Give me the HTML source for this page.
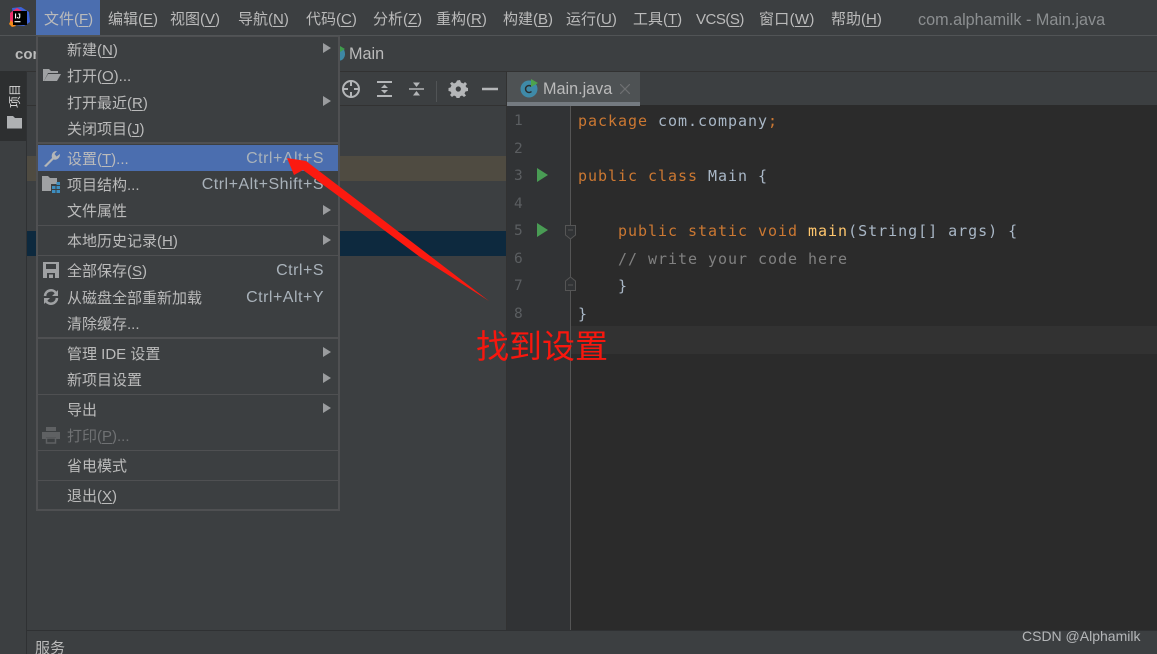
<!DOCTYPE html>
<html><head><meta charset="utf-8"><style>
*{box-sizing:border-box}
html,body{margin:0;padding:0;background:#3c3f41}
#r{position:relative;width:1157px;height:654px;overflow:hidden;background:#3c3f41;font-family:"Liberation Sans","Noto Sans CJK SC",sans-serif;font-size:15px;color:#bbb}
.a{position:absolute}
.t{position:absolute;white-space:nowrap;line-height:20px}
.m{position:absolute;top:10px;white-space:nowrap;line-height:20px;font-size:15px;color:#bbb}
.i{position:absolute;left:67px;white-space:nowrap;line-height:20px;color:#bbb}
.s{position:absolute;white-space:nowrap;line-height:20px;color:#a9b2ba;right:833px;font-size:16px;letter-spacing:.5px}
.v{position:absolute;left:38px;width:300px;height:1px;background:#4f5052}
.ar{position:absolute;left:323px;width:0;height:0;border-left:8px solid #9a9c9e;border-top:5px solid transparent;border-bottom:5px solid transparent}
u{text-underline-offset:2px}
.c{position:absolute;font-family:"DejaVu Sans Mono","Liberation Mono",monospace;font-size:15px;letter-spacing:.97px;line-height:20px;white-space:pre;color:#a9b7c6;left:578px}
.k{color:#cc7832}
.n{position:absolute;left:514px;font-family:"DejaVu Sans Mono","Liberation Mono",monospace;font-size:14.5px;line-height:20px;color:#5b5e61}
</style></head><body><div id="r">
<!-- title bar -->
<div class="a" style="left:0;top:35px;width:1157px;height:1px;background:#515456"></div>
<div class="a" style="left:36px;top:0;width:64px;height:35px;background:#4b6eaf"></div>
<svg class="a" style="left:9px;top:7px" width="21" height="21" viewBox="0 0 21 21"><path d="M3 1L12 0 20 5 21 15 15 19 6 18z" fill="#3d62d8"/><path d="M1 6L8 1 13 4 5 19 1 15z" fill="#ee2f6c"/><path d="M2 13L7 19 3 20 0 17z" fill="#f28a1b"/><rect x="4" y="4" width="14" height="14" fill="#000"/><text x="5.5" y="11.5" font-family="Liberation Sans" font-weight="700" font-size="7.5" fill="#fff">IJ</text><rect x="5.5" y="14" width="6" height="1.3" fill="#ddd"/></svg>
<span class="m" style="left:44px"><span>文件(<u>F</u>)</span></span>
<span class="m" style="left:108px">编辑(<u>E</u>)</span>
<span class="m" style="left:170px">视图(<u>V</u>)</span>
<span class="m" style="left:238px">导航(<u>N</u>)</span>
<span class="m" style="left:306px">代码(<u>C</u>)</span>
<span class="m" style="left:373px">分析(<u>Z</u>)</span>
<span class="m" style="left:436px">重构(<u>R</u>)</span>
<span class="m" style="left:503px">构建(<u>B</u>)</span>
<span class="m" style="left:566px">运行(<u>U</u>)</span>
<span class="m" style="left:633px">工具(<u>T</u>)</span>
<span class="m" style="left:696px;letter-spacing:-.5px">VCS(<u>S</u>)</span>
<span class="m" style="left:759px;letter-spacing:.3px">窗口(<u>W</u>)</span>
<span class="m" style="left:831px">帮助(<u>H</u>)</span>
<span class="m" style="left:918px;color:#8c8f91;font-size:16.2px">com.alphamilk - Main.java</span>
<!-- nav bar -->
<div class="a" style="left:0;top:71px;width:1157px;height:1px;background:#323232"></div>
<span class="t" style="left:15px;top:45px;font-weight:700;font-size:15px">com</span>
<svg class="a" style="left:339px;top:46px" width="8" height="16"><path d="M0 0A8 8 0 0 1 3 14L0 15z" fill="#3d87a5"/><path d="M1 0L6 3 1 6z" fill="#3f9c4b"/></svg>
<span class="t" style="left:349px;top:44px;font-size:16.2px">Main</span>
<!-- left strip -->
<div class="a" style="left:0;top:72px;width:27px;height:558px;background:#3c3f41"></div>
<div class="a" style="left:26px;top:72px;width:1px;height:582px;background:#2f3133"></div>
<div class="a" style="left:0;top:71px;width:26px;height:70px;background:#2d2f30"></div>
<span class="a" style="left:9px;top:84px;font-size:12px;line-height:13px;color:#d5d5d5;writing-mode:vertical-rl;text-orientation:sideways;transform:rotate(180deg)">项目</span>
<svg class="a" style="left:7px;top:116px" width="15" height="13"><path d="M0 0H6L8 2H15V12.500H0z" fill="#afb1b3"/></svg>
<!-- project panel -->
<div class="a" style="left:27px;top:105px;width:480px;height:1px;background:#323232"></div>
<div class="a" style="left:27px;top:156px;width:479px;height:25px;background:#4f4b41"></div>
<div class="a" style="left:27px;top:231px;width:479px;height:25px;background:#0d293e"></div>
<svg class="a" style="left:340px;top:78px" width="160" height="24" fill="none" stroke="#b4b6b8"><circle cx="11" cy="11" r="8" stroke-width="2"/><path d="M11 3V8M11 14V19M3 11H8M14 11H19" stroke-width="2"/><path d="M37 4H52M37 18H52" stroke-width="2"/><path d="M44.500 6.500L48 10H41zM44.500 15.500L48 12H41z" fill="#b4b6b8" stroke="none"/><path d="M69 11H84" stroke-width="1.500"/><path d="M76.500 9L73 4.500H80zM76.500 13L73 17.500H80z" fill="#b4b6b8" stroke="none"/><path d="M96.500 3V24" stroke="#515456"/><g transform="translate(-1,0)"><path d="M118 4.500L121 4 122 6.500 124.500 7.500 126 6 128 8 126.500 10 127.500 11.500 129 12 129 15 126.500 15.500 125.500 17.500 127 19.500 125 21 123 19.500 121 20.500 120.500 22H117.500L117 20.500 115 19.500 113 21 111 19 112.500 17 111.500 15.500 109.500 15V12L111.500 11.500 112.500 9.500 111 7.500 113 6 115 7.500 117 6.500z" transform="translate(0,-2)" fill="#b4b6b8" stroke="none"/><circle cx="119.300" cy="11" r="2.600" fill="#3c3f41" stroke="none"/></g><path d="M142 11H158" stroke-width="2.500"/></svg>
<!-- editor -->
<div class="a" style="left:506px;top:72px;width:1px;height:558px;background:#323232"></div>
<div class="a" style="left:507px;top:105px;width:650px;height:525px;background:#2b2b2b"></div>
<div class="a" style="left:507px;top:106px;width:64px;height:524px;background:#313335"></div>
<div class="a" style="left:507px;top:326px;width:650px;height:28px;background:#323232"></div>
<div class="a" style="left:507px;top:326px;width:64px;height:28px;background:#313335"></div>
<div class="a" style="left:570px;top:106px;width:1px;height:524px;background:#555"></div>
<div class="a" style="left:507px;top:72px;width:133px;height:34px;background:#4e5254"></div>
<div class="a" style="left:507px;top:102px;width:133px;height:4px;background:#747a80"></div>
<svg class="a" style="left:518px;top:78px" width="22" height="20"><circle cx="11" cy="11" r="8.500" fill="#3f8aa8"/><path d="M13.500 8.500A3.500 3.500 0 1 0 13.500 13.500" fill="none" stroke="#2b2d2e" stroke-width="1.500"/><path d="M13 1L20 5 13 9z" fill="#4da34d"/></svg>
<span class="t" style="left:543px;top:79px;color:#bbb;font-size:16.2px">Main.java</span>
<svg class="a" style="left:620px;top:84px" width="10" height="10"><path d="M0 0L10 10M10 0L0 10" stroke="#6e7072" stroke-width="1.200"/></svg>
<span class="n" style="top:111px">1</span><span class="n" style="top:139px">2</span><span class="n" style="top:166px">3</span><span class="n" style="top:194px">4</span><span class="n" style="top:221px">5</span><span class="n" style="top:249px">6</span><span class="n" style="top:276px">7</span><span class="n" style="top:304px">8</span><span class="n" style="top:332px">9</span>
<svg class="a" style="left:537px;top:168px" width="12" height="14"><path d="M0 0L11 7 0 14z" fill="#499c54"/></svg>
<svg class="a" style="left:537px;top:223px" width="12" height="14"><path d="M0 0L11 7 0 14z" fill="#499c54"/></svg>
<svg class="a" style="left:564px;top:224px" width="14" height="68" fill="#313335" stroke="#555"><path d="M1.500 1.500H11.500V11L6.500 15 1.500 11z"/><path d="M4 6H9"/><path d="M1.500 66.500H11.500V57L6.500 53 1.500 57z"/><path d="M4 61H9"/></svg>
<div class="c" style="top:111px"><span class="k">package</span> com.company<span class="k">;</span></div>
<div class="c" style="top:166px"><span class="k">public class</span> Main {</div>
<div class="c" style="top:221px">    <span class="k">public static void</span> <span style="color:#ffc66d">main</span>(String[] args) {</div>
<div class="c" style="top:249px;color:#808080">    // write your code here</div>
<div class="c" style="top:276px">    }</div>
<div class="c" style="top:304px">}</div>
<!-- bottom -->
<div class="a" style="left:27px;top:630px;width:1130px;height:1px;background:#2f3133"></div>
<span class="t" style="left:35px;top:639px">服务</span>
<span class="t" style="left:1022px;top:626px;font-size:14px;color:#b5b7b9">CSDN @Alphamilk</span>
<!-- menu -->
<div class="a" style="left:36px;top:36px;width:304px;height:475px;background:#3c3f41;border:solid #4f5052;border-width:1px 2px 2px 2px"></div>
<div class="a" style="left:38px;top:145px;width:300px;height:26px;background:#4b6eaf"></div>
<div class="v" style="top:142px;height:2px"></div><div class="v" style="top:225px"></div><div class="v" style="top:255px"></div><div class="v" style="top:337px;height:2px"></div><div class="v" style="top:394px"></div><div class="v" style="top:450px"></div><div class="v" style="top:480px"></div>
<span class="i" style="top:41px">新建(<u>N</u>)</span>
<span class="i" style="top:67px">打开(<u>O</u>)...</span>
<span class="i" style="top:94px">打开最近(<u>R</u>)</span>
<span class="i" style="top:120px">关闭项目(<u>J</u>)</span>
<span class="i" style="top:150px">设置(<u>T</u>)...</span>
<span class="i" style="top:176px">项目结构...</span>
<span class="i" style="top:202px">文件属性</span>
<span class="i" style="top:232px">本地历史记录(<u>H</u>)</span>
<span class="i" style="top:262px">全部保存(<u>S</u>)</span>
<span class="i" style="top:289px">从磁盘全部重新加载</span>
<span class="i" style="top:315px">清除缓存...</span>
<span class="i" style="top:345px">管理 IDE 设置</span>
<span class="i" style="top:371px">新项目设置</span>
<span class="i" style="top:401px">导出</span>
<span class="i" style="top:427px;color:#6f7173">打印(<u>P</u>)...</span>
<span class="i" style="top:457px">省电模式</span>
<span class="i" style="top:487px">退出(<u>X</u>)</span>
<span class="s" style="top:149px">Ctrl+Alt+S</span>
<span class="s" style="top:175px">Ctrl+Alt+Shift+S</span>
<span class="s" style="top:261px">Ctrl+S</span>
<span class="s" style="top:288px">Ctrl+Alt+Y</span>
<div class="ar" style="top:43px"></div><div class="ar" style="top:96px"></div><div class="ar" style="top:205px"></div><div class="ar" style="top:235px"></div><div class="ar" style="top:347px"></div><div class="ar" style="top:373px"></div><div class="ar" style="top:403px"></div>
<!-- menu icons -->
<svg class="a" style="left:43px;top:68px" width="18" height="14"><path d="M0 1H6L8 3H15V5H5L1 13H0z" fill="#9fa1a3"/><path d="M5 6H18L14 13H1z" fill="#9fa1a3"/></svg>
<svg class="a" style="left:43px;top:150px" width="18" height="18"><path d="M1 16L9 8C8 4 10 1 14 1L11.500 4 13.500 6.500 17 4C17 8 14 10.500 10.500 9.500L3 17z" fill="#b4b6b8"/></svg>
<svg class="a" style="left:42px;top:176px" width="19" height="17"><path d="M0 0H6L8 2H15V8H9V15H0z" fill="#9fa1a3"/><path d="M10 10H13.500V13H10zM14.500 10H18V13H14.500zM10 14H13.500V17H10zM14.500 14H18V17H14.500zM14.500 6H18V9H14.500z" fill="#3d8ec0"/></svg>
<svg class="a" style="left:43px;top:262px" width="16" height="16"><path d="M0 0H16V16H0z" fill="#9fa1a3"/><path d="M3 2H13V7H3zM4 11H12V16H4z" fill="#3c3f41"/><path d="M6 12.500H10V16H6z" fill="#9fa1a3"/></svg>
<svg class="a" style="left:43px;top:289px" width="16" height="16" fill="none" stroke="#9fa1a3" stroke-width="2.600"><path d="M2 7A6 6 0 0 1 13 4"/><path d="M14 9A6 6 0 0 1 3 12"/><path d="M15 1V7H9zM1 15V9H7z" fill="#9fa1a3" stroke="none"/></svg>
<svg class="a" style="left:42px;top:427px" width="18" height="17"><path d="M4 0H14V4H4zM0 5H18V12H14V10H4V12H0z" fill="#5f6163"/><path d="M4.500 11H13.500V16H4.500z" fill="none" stroke="#5f6163" stroke-width="1.500"/></svg>
<!-- annotation -->
<svg class="a" style="left:0;top:0" width="1157" height="654"><polygon points="287,158 306,161 489,301 420,257 337,195 303,170 294,175" fill="#fb1a10"/></svg>
<span class="a" style="left:476px;top:322px;font-size:33px;line-height:44px;white-space:nowrap;color:#f8170e;font-family:'Noto Sans CJK SC',sans-serif;font-weight:400">找到设置</span>
</div></body></html>
